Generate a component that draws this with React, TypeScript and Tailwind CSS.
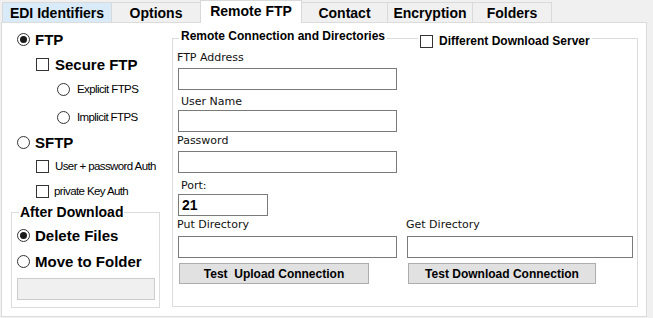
import React from 'react';

const tabs = [
  { label: 'EDI Identifiers', cls: 'w-[109px] mt-[2px] h-[20px] border-l border-t bg-[#d9ebf9]' },
  { label: 'Options', cls: 'w-[89px] mt-[2px] h-[20px] border-l border-t bg-[#f0f0f0]' },
  { label: 'Remote FTP', cls: 'w-[102px] h-[23px] border-l border-t border-r bg-white relative z-10 pt-[1px]', active: true },
  { label: 'Contact', cls: 'w-[85px] mt-[2px] h-[20px] border-t bg-[#f0f0f0]' },
  { label: 'Encryption', cls: 'w-[85px] mt-[2px] h-[20px] border-l border-t bg-[#f0f0f0]' },
  { label: 'Folders', cls: 'w-[80px] mt-[2px] h-[20px] border-l border-t border-r bg-[#f0f0f0]' },
];

function Radio({ checked }: { checked?: boolean }) {
  return (
    <span className="w-[13px] h-[13px] rounded-full border border-[#333] bg-white flex items-center justify-center shrink-0">
      {checked && <span className="w-[7px] h-[7px] rounded-full bg-[#1a1a1a]" />}
    </span>
  );
}

function Check() {
  return <span className="block w-[13px] h-[13px] border border-[#333] bg-white shrink-0" />;
}

// small condensed captions on the left
const small = 'text-[11.5px] leading-[14px] tracking-[-0.6px] whitespace-nowrap';
const label = "font-['DejaVu_Sans',Verdana,sans-serif] text-[11px] leading-[13px] text-[#111]";
const textbox = 'h-[22px] border border-[#7a7a7a] bg-white';
const button = 'h-[21px] border border-[#adadad] bg-[#e1e1e1] text-[12px] font-bold leading-[14px] flex items-center justify-center whitespace-pre';

export default function App() {
  return (
    <div className="w-[653px] h-[318px] bg-[#f0f0f0] overflow-hidden text-black font-['Liberation_Sans',Arial,sans-serif]">
      {/* Tab strip */}
      <div className="flex h-[23px] pl-[2px] items-start">
        {tabs.map((t) => (
          <div
            key={t.label}
            className={`${t.cls} border-[#d9d9d9] flex justify-center pt-[2px] text-[14px] font-bold leading-[16px]`}
          >
            {t.label}
          </div>
        ))}
      </div>

      {/* Tab page */}
      <div className="-mt-px ml-px w-[646px] h-[295px] border border-[#dcdcdc] bg-white flex">
        {/* Left column */}
        <div className="w-[170px] flex flex-col">
          <div className="mt-[8px] ml-[15px] h-[17px] flex items-center gap-[5px] text-[15px] font-bold leading-[17px]">
            <Radio checked />
            FTP
          </div>
          <div className="mt-[8px] ml-[34px] h-[17px] flex items-center gap-[6px] text-[15px] font-bold leading-[17px]">
            <Check />
            Secure FTP
          </div>
          <div className={`mt-[9px] ml-[55px] h-[14px] flex items-center gap-[7px] ${small}`}>
            <Radio />
            Explicit FTPS
          </div>
          <div className={`mt-[14px] ml-[55px] h-[14px] flex items-center gap-[7px] ${small}`}>
            <Radio />
            Implicit FTPS
          </div>
          <div className="mt-[10px] ml-[15px] h-[17px] flex items-center gap-[5px] text-[15px] font-bold leading-[17px]">
            <Radio />
            SFTP
          </div>
          <div className={`mt-[8px] ml-[34px] h-[14px] flex items-center gap-[6px] ${small}`}>
            <Check />
            User + password Auth
          </div>
          <div className={`mt-[11px] ml-[34px] h-[14px] flex items-center gap-[5px] ${small}`}>
            <Check />
            private Key Auth
          </div>

          {/* After Download group */}
          <div className="mt-[14px] ml-[9px] w-[149px] border border-[#dcdcdc] pb-[7px] flex flex-col">
            <div className="-mt-[9px] ml-[7px] px-[1px] bg-white w-fit text-[14px] font-bold leading-[16px]">
              After Download
            </div>
            <div className="mt-[7px] ml-[5px] h-[17px] flex items-center gap-[5px] text-[15px] font-bold leading-[17px]">
              <Radio checked />
              Delete Files
            </div>
            <div className="mt-[9px] ml-[5px] h-[17px] flex items-center gap-[5px] text-[15px] font-bold leading-[17px]">
              <Radio />
              Move to Folder
            </div>
            <div className="mt-[8px] ml-[5px] w-[138px] h-[22px] border border-[#cccccc] bg-[#f0f0f0]" />
          </div>
        </div>

        {/* Remote Connection group */}
        <div className="mt-[15px] w-[466px] h-[269px] border border-[#dcdcdc] flex flex-col">
          <div className="-mt-[10px] h-[19px] grid grid-cols-[245px_auto] items-start">
            <div className="ml-[6px] px-[2px] bg-white w-fit text-[12px] font-bold leading-[14px]">
              Remote Connection and Directories
            </div>
            <div className="mt-[5px] px-[2px] bg-white w-fit flex items-start">
              <span className="mt-[1px]">
                <Check />
              </span>
              <span className="ml-[6px] text-[12px] font-bold leading-[14px]">Different Download Server</span>
            </div>
          </div>

          <div className="pl-[4px] flex flex-col">
            <div className={`mt-[3px] ${label}`}>FTP Address</div>
            <div className={`mt-[4px] ml-[1px] w-[219px] ${textbox}`} />
            <div className={`mt-[5px] ml-[4px] ${label}`}>User Name</div>
            <div className={`mt-[2px] ml-[1px] w-[219px] ${textbox}`} />
            <div className={`mt-[2px] ${label}`}>Password</div>
            <div className={`mt-[4px] ml-[1px] w-[219px] ${textbox}`} />
            <div className={`mt-[6px] ml-[4px] ${label}`}>Port:</div>
            <div className={`mt-[2px] ml-[1px] w-[90px] ${textbox} flex items-center pl-[3px] text-[14px] font-bold leading-[16px]`}>
              21
            </div>

            <div className="flex">
              <div className="w-[229px] flex flex-col">
                <div className={`mt-[2px] ${label}`}>Put Directory</div>
                <div className={`mt-[5px] ml-[1px] w-[219px] ${textbox}`} />
                <div className={`mt-[5px] ml-[2px] w-[190px] ${button}`}>Test  Upload Connection</div>
              </div>
              <div className="flex flex-col">
                <div className={`mt-[2px] ${label}`}>Get Directory</div>
                <div className={`mt-[5px] ml-[1px] w-[226px] ${textbox}`} />
                <div className={`mt-[5px] ml-[2px] w-[188px] ${button}`}>Test Download Connection</div>
              </div>
            </div>
          </div>
        </div>
      </div>
    </div>
  );
}
